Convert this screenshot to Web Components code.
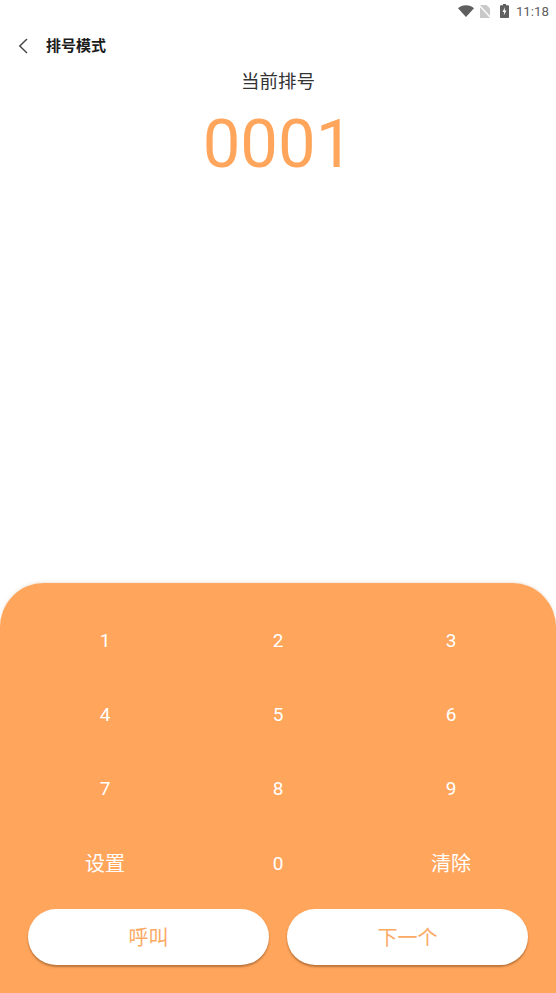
<!DOCTYPE html>
<html lang="zh">
<head>
<meta charset="utf-8">
<title>排号模式</title>
<style>
html, body { margin: 0; padding: 0; background: #fff; }
body { font-family: Roboto, "Noto Sans CJK SC", sans-serif; }
</style>
</head>
<body>
<queue-app></queue-app>
<script>
const CJK = 'Roboto, "Noto Sans CJK SC", sans-serif';

class StatusBar extends HTMLElement {
    connectedCallback() {
        this.attachShadow({ mode: 'open' });
        this.shadowRoot.innerHTML = `
            <style>
                :host { display: flex; align-items: center; justify-content: flex-end; height: 22px; padding-right: 7px; color: #5f5f5f; font: 400 13.300px ${CJK}; }
                svg { display: block; }
                .wifi { margin-right: 6px; }
                .sim { margin-right: 10px; }
                .bat { margin-right: 7px; }
            </style>
            <svg class="wifi" width="16" height="12" viewBox="0 0 16 12"><path fill="#5f5f5f" d="M0 3.2C2 1.3 4.800 0.200 8 0.200s6 1.100 8 3L8 12z"/></svg>
            <svg class="sim" width="10" height="13" viewBox="0 0 10 13"><path fill="#c9c9c9" d="M1 0h5.500L10 3.500V13H0V1a1 1 0 0 1 1-1z"/><path stroke="#fff" stroke-width="1.200" d="M0 1l10 11"/></svg>
            <svg class="bat" width="9" height="14" viewBox="0 0 9 14"><path fill="#5f5f5f" d="M3 0h3v1.300h2.200a.8.8 0 0 1 .8.8v11.100a.8.8 0 0 1-.8.8H.8a.8.8 0 0 1-.8-.8V2.100a.8.8 0 0 1 .8-.8H3z"/><path fill="#fff" d="M5 3L2.500 8h1.700L3.700 11.500 6.500 6.500H4.700z"/></svg>
            <span>11:18</span>
        `;
    }
}

class TitleBar extends HTMLElement {
    connectedCallback() {
        this.attachShadow({ mode: 'open' });
        this.shadowRoot.innerHTML = `
            <style>
                :host { display: flex; align-items: center; height: 48px; padding-left: 18px; color: #1c1c1c; }
                svg { display: block; margin-right: 18px; }
                .title { font: 700 15px/20px ${CJK}; }
            </style>
            <svg width="10" height="16" viewBox="0 0 10 16"><path fill="none" stroke="#4a4a4a" stroke-width="1.500" d="M9 1L1.800 8 9 15"/></svg>
            <span class="title"><slot></slot></span>
        `;
    }
}

class CurrentNumber extends HTMLElement {
    connectedCallback() {
        this.attachShadow({ mode: 'open' });
        this.shadowRoot.innerHTML = `
            <style>
                :host { display: block; text-align: center; }
                .label { font: 400 18.500px/26px ${CJK}; color: #333; }
                .num { font: 400 67px/78px ${CJK}; color: #ffa55c; margin-top: 10px; }
            </style>
            <div class="label">当前排号</div>
            <div class="num">${this.getAttribute('value')}</div>
        `;
    }
}

class KeyPad extends HTMLElement {
    connectedCallback() {
        const keys = ['1', '2', '3', '4', '5', '6', '7', '8', '9', '设置', '0', '清除'];
        this.attachShadow({ mode: 'open' });
        this.shadowRoot.innerHTML = `
            <style>
                :host { display: block; background: #ffa55c; border-radius: 44px 44px 0 0; padding: 20px 28px 28px; box-sizing: border-box; height: 410px; box-shadow: 0 -1px 3px rgba(200,150,100,.25); }
                .grid { display: grid; grid-template-columns: repeat(3, 173px); grid-auto-rows: 74.4px; margin: 0 -9.500px; }
                .key { display: flex; align-items: center; justify-content: center; color: #fff; font: 400 19px ${CJK}; }
                .key.word { font-size: 20px; padding-bottom: 2px; box-sizing: border-box; }
                .actions { display: flex; gap: 18px; margin-top: 8px; }
            </style>
            <div class="grid">
                ${keys.map(k => `<div class="key ${k.length > 1 ? 'word' : ''}">${k}</div>`).join('')}
            </div>
            <div class="actions">
                <pill-button>呼叫</pill-button>
                <pill-button>下一个</pill-button>
            </div>
        `;
    }
}

class PillButton extends HTMLElement {
    connectedCallback() {
        this.attachShadow({ mode: 'open' });
        this.shadowRoot.innerHTML = `
            <style>
                :host { display: flex; flex: 1; align-items: center; justify-content: center; height: 56px; border-radius: 28px; background: #fff; color: #fbaa66; font: 400 20px ${CJK}; box-shadow: 0 2px 2px rgba(150,90,40,.65); }
            </style>
            <slot></slot>
        `;
    }
}

class QueueApp extends HTMLElement {
    connectedCallback() {
        this.attachShadow({ mode: 'open' });
        this.shadowRoot.innerHTML = `
            <style>
                :host { display: flex; flex-direction: column; height: 993px; overflow: hidden; background: #fff; }
                current-number { margin-top: -1px; }
                key-pad { margin-top: auto; }
            </style>
            <status-bar></status-bar>
            <title-bar>排号模式</title-bar>
            <current-number value="0001"></current-number>
            <key-pad></key-pad>
        `;
    }
}

customElements.define('status-bar', StatusBar);
customElements.define('title-bar', TitleBar);
customElements.define('current-number', CurrentNumber);
customElements.define('pill-button', PillButton);
customElements.define('key-pad', KeyPad);
customElements.define('queue-app', QueueApp);
</script>
</body>
</html>
